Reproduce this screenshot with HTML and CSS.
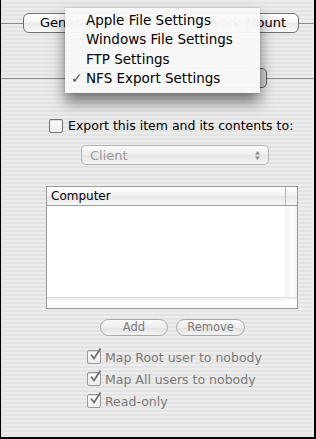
FILE: index.html
```html
<!DOCTYPE html>
<html lang="en">
<head>
    <meta charset="UTF-8">
    <title>NFS Export Settings</title>
    <link rel="stylesheet" href="styles.css">
</head>
<body>
    <div class="window">
        <!-- tab strip -->
        <div class="tab-row">
            <div class="segments">
                <span class="seg seg-first">General</span>
                <span class="seg seg-mid"></span>
                <span class="seg seg-last">Network Mount</span>
            </div>
        </div>

        <!-- protocol popup (mostly hidden by the open menu) -->
        <div class="proto-row">
            <div class="proto-popup"></div>
        </div>

        <label class="export-row">
            <span class="box"></span>
            <span>Export this item and its contents to:</span>
        </label>

        <div class="client-popup">
            <span>Client</span>
            <span class="arrows">
                <svg width="7" height="11" viewBox="0 0 7 11">
                    <path d="M3.5 1 L6 4.5 L1 4.5 Z" fill="#8a8a8a"/>
                    <path d="M3.5 10 L6 6.5 L1 6.5 Z" fill="#8a8a8a"/>
                </svg>
            </span>
        </div>

        <div class="table">
            <div class="table-head">
                <span class="col-name">Computer</span>
                <span class="col-corner"></span>
            </div>
            <div class="table-body">
                <div class="rows"></div>
                <div class="vscroll"></div>
            </div>
            <div class="hscroll"></div>
        </div>

        <div class="btn-row">
            <button class="pill">Add</button>
            <button class="pill">Remove</button>
        </div>

        <div class="options">
            <div class="opt"><span class="box checked"><svg width="14" height="14" viewBox="0 0 14 14"><path d="M3 6.5 L6 10.5 L12.5 0.5" fill="none" stroke="#6e6e6e" stroke-width="1.8"/></svg></span>Map Root user to nobody</div>
            <div class="opt"><span class="box checked"><svg width="14" height="14" viewBox="0 0 14 14"><path d="M3 6.5 L6 10.5 L12.5 0.5" fill="none" stroke="#6e6e6e" stroke-width="1.8"/></svg></span>Map All users to nobody</div>
            <div class="opt"><span class="box checked"><svg width="14" height="14" viewBox="0 0 14 14"><path d="M3 6.5 L6 10.5 L12.5 0.5" fill="none" stroke="#6e6e6e" stroke-width="1.8"/></svg></span>Read-only</div>
        </div>

        <!-- open popup menu -->
        <ul class="menu">
            <li>Apple File Settings</li>
            <li>Windows File Settings</li>
            <li>FTP Settings</li>
            <li class="on"><span class="tick">&#10003;</span>NFS Export Settings</li>
        </ul>
    </div>
</body>
</html>
```

FILE: styles.css
```css
body {
    margin: 0;
    padding: 0;
    background-color: #000;
}

.window {
    position: relative;
    width: 316px;
    height: 439px;
    box-sizing: border-box;
    border-left: 1px solid #000;
    border-right: 2px solid #000;
    border-bottom: 2px solid #000;
    background-color: #e8e8e8;
    background-image: repeating-linear-gradient(180deg, #ececec 0px, #ececec 2px, #e3e3e3 2px, #e3e3e3 4px);
    font-family: "DejaVu Sans", sans-serif;
    overflow: hidden;
}

/* tab strip */
.tab-row {
    margin-top: 13px;
    height: 20px;
    display: flex;
    background: linear-gradient(180deg, transparent 10px, #8c8c8c 10px, #8c8c8c 11px, transparent 11px);
}

.segments {
    margin-left: 22px;
    width: 276px;
    height: 20px;
    box-sizing: border-box;
    display: flex;
    border: 1px solid #6f6f6f;
    border-radius: 6px;
    background: linear-gradient(180deg, #ffffff, #f3f3f3 50%, #e9e9e9 51%, #fafafa);
    overflow: hidden;
}

.seg {
    font-size: 13px;
    line-height: 18px;
    color: #000;
}

.seg-first {
    width: 72px;
    padding-left: 16px;
    box-sizing: border-box;
    border-right: 1px solid #9a9a9a;
}

.seg-mid {
    flex: 1;
    border-right: 1px solid #9a9a9a;
}

.seg-last {
    width: 116px;
    padding-right: 12px;
    box-sizing: border-box;
    text-align: right;
}

/* protocol popup row */
.proto-row {
    margin-top: 35px;
    height: 20px;
    display: flex;
    background: linear-gradient(180deg, transparent 10px, #8c8c8c 10px, #8c8c8c 11px, transparent 11px);
}

.proto-popup {
    margin-left: 70px;
    width: 196px;
    height: 20px;
    box-sizing: border-box;
    border: 1px solid #5e5e5e;
    border-radius: 5px;
    background: linear-gradient(90deg, #f2f2f2 0, #f2f2f2 175px, #bcbcbc 176px, #d8d8d8 100%);
}

/* export checkbox */
.export-row {
    margin-top: 30px;
    margin-left: 48px;
    display: flex;
    align-items: center;
    gap: 5px;
    font-size: 12.5px;
    color: #000;
}

.box {
    width: 14px;
    height: 14px;
    box-sizing: border-box;
    border: 1px solid #707070;
    border-radius: 2px;
    background: linear-gradient(180deg, #ffffff, #ececec);
    box-shadow: inset 0 1px 1px rgba(0, 0, 0, 0.15);
    flex-shrink: 0;
}

/* client popup (disabled) */
.client-popup {
    margin-top: 12px;
    margin-left: 80px;
    width: 188px;
    height: 20px;
    box-sizing: border-box;
    display: flex;
    align-items: center;
    justify-content: space-between;
    padding: 0 8px;
    border: 1px solid #b4b4b4;
    border-radius: 5px;
    background: linear-gradient(180deg, #fbfbfb, #ededed 50%, #e4e4e4 51%, #f6f6f6);
    font-size: 13px;
    color: #9a9a9a;
}

.arrows {
    display: flex;
    margin-right: -1px;
}

/* table */
.table {
    margin-top: 21px;
    margin-left: 45px;
    width: 252px;
    height: 123px;
    box-sizing: border-box;
    border: 1px solid #9c9c9c;
    display: flex;
    flex-direction: column;
    background-color: #fff;
}

.table-head {
    height: 18px;
    display: flex;
    border-bottom: 1px solid #9c9c9c;
    background: linear-gradient(180deg, #ffffff, #f0f0f0 50%, #e7e7e7 51%, #f7f7f7);
}

.col-name {
    flex: 1;
    padding-left: 4px;
    font-size: 12px;
    line-height: 18px;
    border-right: 1px solid #b5b5b5;
}

.col-corner {
    width: 11px;
}

.table-body {
    flex: 1;
    display: flex;
}

.rows {
    flex: 1;
}

.vscroll {
    width: 11px;
    background: linear-gradient(90deg, #f4f4f4, #ffffff 60%, #eeeeee);
    border-left: 1px solid #f0f0f0;
}

.hscroll {
    height: 10px;
    border-top: 1px solid #dcdcdc;
    background: linear-gradient(180deg, #eeeeee, #ffffff 40%, #fafafa);
}

/* add / remove */
.btn-row {
    margin-top: 10px;
    margin-left: 99px;
    display: flex;
    gap: 8px;
}

.pill {
    height: 17px;
    padding: 0;
    border: 1px solid #a8a8a8;
    border-radius: 9px;
    background: linear-gradient(180deg, #fbfbfb, #ececec 50%, #e2e2e2 51%, #f3f3f3);
    font-family: "DejaVu Sans", sans-serif;
    font-size: 11.5px;
    line-height: 15px;
    color: #7a7a7a;
}

.pill:first-child {
    width: 68px;
}

.pill:last-child {
    width: 69px;
}

/* mapping options */
.options {
    margin-top: 14px;
    margin-left: 86px;
    display: flex;
    flex-direction: column;
    gap: 8px;
}

.opt {
    display: flex;
    align-items: center;
    gap: 4px;
    height: 14px;
    font-size: 12.5px;
    color: #7a7a7a;
}

.box.checked {
    border-color: #9a9a9a;
    position: relative;
}

.box.checked svg {
    position: absolute;
    left: 0;
    top: -3px;
}

/* popup menu */
.menu {
    position: absolute;
    left: 64px;
    top: 8px;
    width: 195px;
    margin: 0;
    padding: 3px 0 5px;
    list-style: none;
    background-color: rgba(248, 248, 248, 0.97);
    box-shadow: 0 9px 14px rgba(0, 0, 0, 0.5), 0 0 1px rgba(0, 0, 0, 0.4);
}

.menu li {
    height: 19.3px;
    line-height: 19px;
    padding-left: 21px;
    font-size: 13.5px;
    color: #000;
    position: relative;
}

.tick {
    position: absolute;
    left: 6px;
    color: #555;
    font-size: 14px;
}
```
